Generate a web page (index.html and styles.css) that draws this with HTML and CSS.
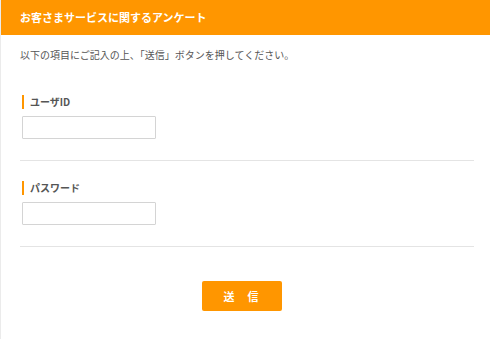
FILE: index.html
```html
<!DOCTYPE html>
<html lang="ja">
<head>
  <meta charset="UTF-8">
  <title>お客さまサービスに関するアンケート</title>
  <link rel="stylesheet" href="styles.css">
</head>
<body>
  <div class="page">
    <div class="header">お客さまサービスに関するアンケート</div>
    <div class="content">
      <p class="intro">以下の項目にご記入の上、「送信」ボタンを押してください。</p>
      <div class="field">
        <div class="label">ユーザID</div>
        <input type="text" class="text-input">
      </div>
      <div class="field">
        <div class="label">パスワード</div>
        <input type="password" class="text-input">
      </div>
      <div class="actions">
        <button class="submit-btn">送　信</button>
      </div>
    </div>
  </div>
</body>
</html>
```

FILE: styles.css
```css
* { margin: 0; padding: 0; box-sizing: border-box; }
body {
  font-family: "Noto Sans CJK JP", "Noto Sans", sans-serif;
  background: #fff;
  color: #555;
}
.page {
  border-left: 1px solid #ebebeb;
  height: 339px;
}
.header {
  height: 35px;
  line-height: 35px;
  padding-left: 19px;
  background: #ff9600;
  color: #fff;
  font-size: 11px;
  font-weight: bold;
}
.content {
  padding: 13px 16px 0 19px;
}
.intro {
  font-size: 10px;
  line-height: 14px;
  color: #555;
}
.field {
  padding: 20px 0 21px 0;
  border-bottom: 1px solid #e4e4e4;
}
.intro + .field {
  padding-top: 33px;
}
.label {
  margin-left: 2px;
  border-left: 2px solid #ff9600;
  padding-left: 6px;
  font-size: 10px;
  line-height: 14px;
  font-weight: bold;
  color: #555;
}
.text-input {
  display: block;
  margin: 7px 0 0 2px;
  width: 134px;
  height: 23px;
  border: 1px solid #d4d4d4;
  border-radius: 1px;
  background: #fff;
}
.actions {
  display: flex;
  justify-content: center;
  padding: 34px 11px 0 0;
}
.submit-btn {
  width: 80px;
  height: 30px;
  border: none;
  border-radius: 2px;
  background: #ff9600;
  color: #fff;
  font-family: "Noto Sans CJK JP", sans-serif;
  font-size: 11px;
  font-weight: bold;
  letter-spacing: 1px;
}
```
